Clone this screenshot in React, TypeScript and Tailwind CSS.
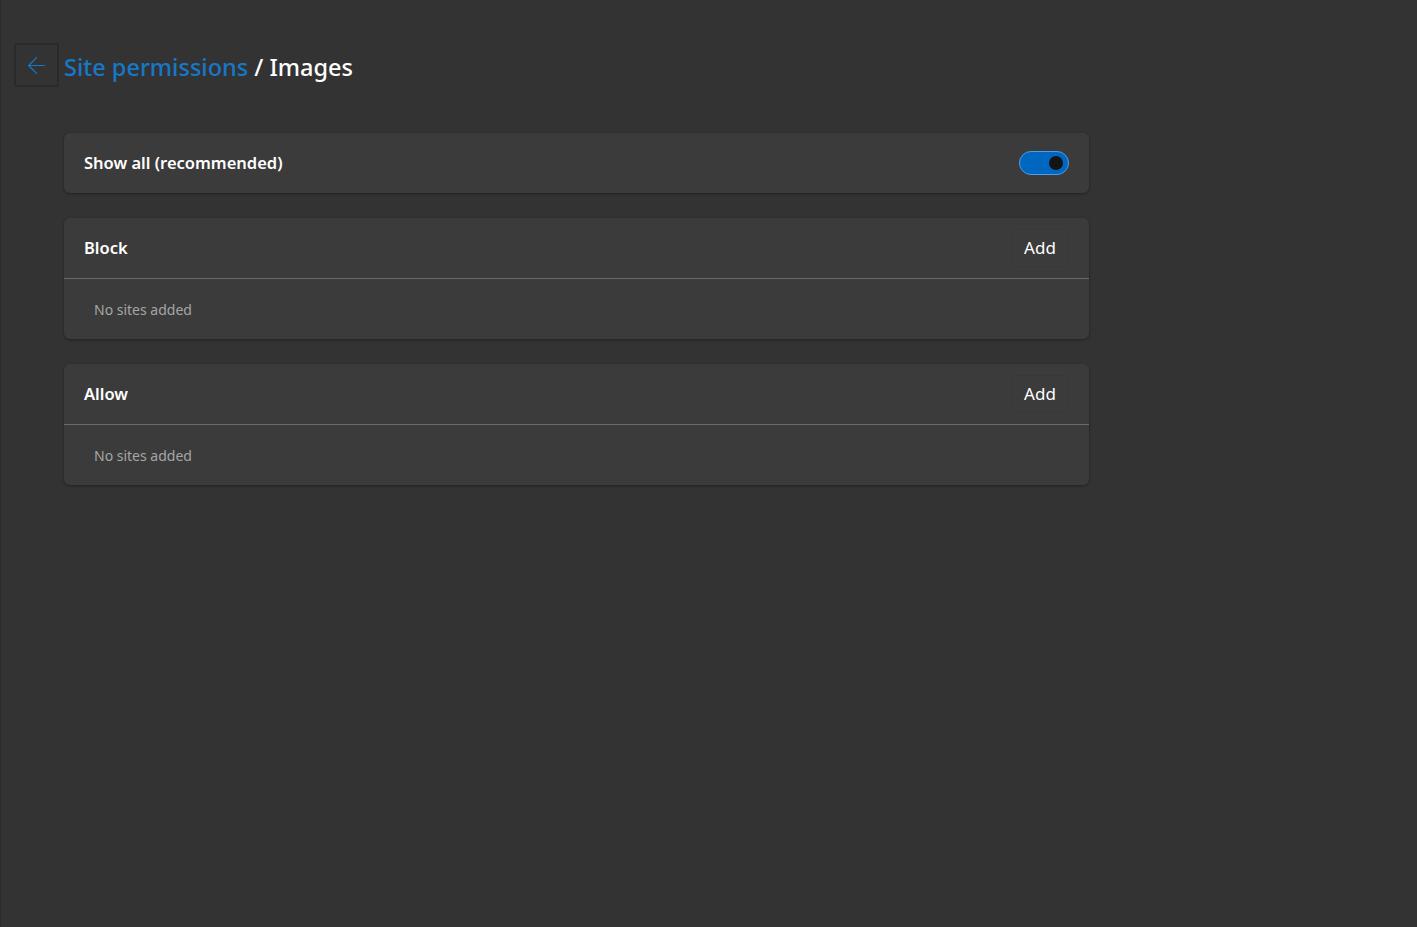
import { ArrowLeft } from "lucide-react";

const font = { fontFamily: '"Segoe UI", "Noto Sans", "Open Sans", sans-serif' };

function Toggle({ on }: { on: boolean }) {
  return (
    <button
      aria-pressed={on}
      className="relative h-[24px] w-[50px] rounded-full border border-[#4d9fe6] bg-[#0067c0]"
    >
      <span className="absolute right-[5px] top-1/2 h-[14px] w-[14px] -translate-y-1/2 rounded-full bg-[#141414]" />
    </button>
  );
}

function SiteList({ title }: { title: string }) {
  return (
    <div className="rounded-[6px] bg-[#3b3b3b] shadow-[0_1px_3px_rgba(0,0,0,0.35)]">
      <div className="flex h-[60px] items-center justify-between pl-[20px] pr-[21px]">
        <p className="text-[16.5px] font-semibold text-white">{title}</p>
        <button className="flex h-[38px] w-[56px] items-center justify-center rounded-[4px] border border-[#383838] text-[17px] text-white">
          Add
        </button>
      </div>
      <div className="h-px bg-[#6a6a6a]" />
      <div className="flex h-[60px] items-center pl-[30px]">
        <p className="text-[14px] text-[#a6a6a6]">No sites added</p>
      </div>
    </div>
  );
}

export default function App() {
  return (
    <div className="min-h-[927px] w-full border-l border-[#2a2a2a] bg-[#333333]" style={font}>
      <div className="flex items-center gap-[5px] pl-[13px] pt-[43px]">
        <button className="flex h-[44px] w-[45px] items-center justify-center rounded-[2px] border-2 border-[#2a2a2a] text-[#1778c8]">
          <ArrowLeft size={27} strokeWidth={1.1} />
        </button>
        <h1 className="pt-[4px] text-[23.5px] font-medium leading-[32px] text-white">
          <span className="text-[#1778c8]">Site permissions</span> / Images
        </h1>
      </div>

      <div className="mt-[46px] flex w-[1025px] flex-col gap-[25px] pl-[63px] box-content">
        <div className="flex h-[60px] items-center justify-between rounded-[6px] bg-[#3b3b3b] pl-[20px] pr-[20px] shadow-[0_1px_3px_rgba(0,0,0,0.35)]">
          <p className="text-[16.5px] font-semibold text-white">Show all (recommended)</p>
          <Toggle on />
        </div>
        <SiteList title="Block" />
        <SiteList title="Allow" />
      </div>
    </div>
  );
}
